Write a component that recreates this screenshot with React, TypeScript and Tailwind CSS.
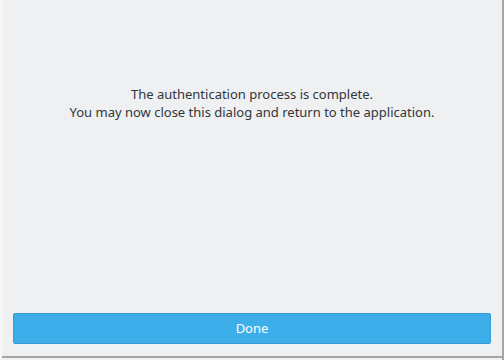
export default function App() {
  return (
    <div className="w-[504px] h-[360px] flex bg-[#eff0f1] font-['Noto_Sans',sans-serif] overflow-hidden">
      <div className="w-[2px] bg-[#f7f7f7]" />
      <div className="flex-1 flex flex-col">
        <div className="flex-1 flex flex-col">
          <div className="pt-[85px] text-center text-[13px] leading-[18px] text-[#31363b]">
            <p>The authentication process is complete.</p>
            <p>You may now close this dialog and return to the application.</p>
          </div>
        </div>
        <div className="px-[11px] pb-[12px]">
          <button
            type="button"
            className="w-full h-[31px] rounded-[2px] border border-[#3a9ad6] bg-[#3daee9] text-white text-[13px]"
          >
            Done
          </button>
        </div>
        <div className="h-[2px] bg-[#a5a5a5]" />
        <div className="h-[2px]" />
      </div>
      <div className="w-[2px] bg-[#a5a5a5]" />
    </div>
  );
}
